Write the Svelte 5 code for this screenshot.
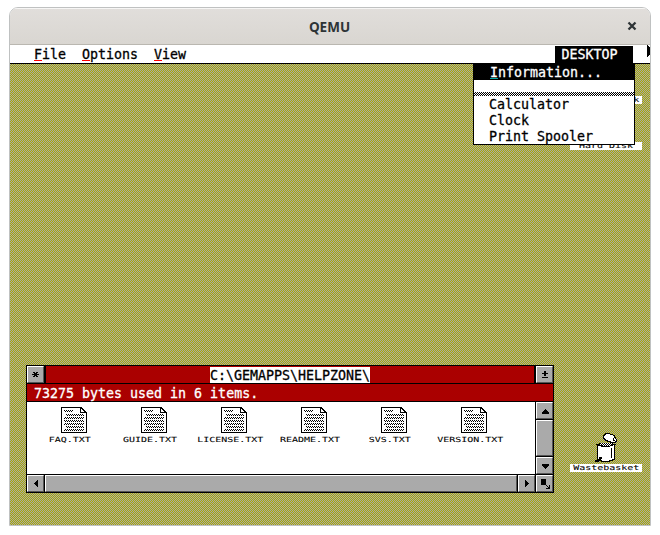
<script>
  const files = ['FAQ.TXT', 'GUIDE.TXT', 'LICENSE.TXT', 'README.TXT', 'SVS.TXT', 'VERSION.TXT'];
  const menus = ['File', 'Options', 'View'];
  const apps = ['Calculator', 'Clock', 'Print Spooler'];
  const lines = [[3, 3, 9], [5, 7, 18], [3, 10, 20], [3, 13, 20], [3, 16, 20], [5, 19, 18], [3, 22, 20]];
</script>

{#snippet glyph(d)}
  <svg width="15" height="15" viewBox="0 0 15 15" shape-rendering="crispEdges"><path {d} /></svg>
{/snippet}

<div class="frame">
  <header class="caption">
    <span>QEMU</span>
    <svg class="close" width="10" height="10" viewBox="0 0 10 10"><path d="M1.5 1.5l7 7M8.500 1.500l-7 7" stroke="#2e3436" stroke-width="2.3" /></svg>
  </header>
  <div class="screen">
    <nav class="menubar">
      {#each menus as m}
        <span class="item">{m}<i></i></span>
      {/each}
      <span class="desk">DESKTOP</span>
      <svg class="more" width="3" height="12" viewBox="0 0 3 12" shape-rendering="crispEdges"><path d="M0 0h1v1h1v1h1v8h-1v1h-1v1h-1z" /></svg>
    </nav>
    <main class="desktop">
      <div class="label floppy"><span class="tiny">Floppy Disk</span></div>
      <div class="label hard"><span class="tiny">Hard Disk</span></div>
      <div class="trash">
        <svg width="24" height="30" viewBox="0 0 24 30" shape-rendering="crispEdges">
          <defs>
            <pattern id="mesh" width="2" height="2" patternUnits="userSpaceOnUse"><rect width="2" height="2" fill="#fff" /><path d="M0 0h1v1H0zM1 1h1v1H1z" /></pattern>
          </defs>
          <path d="M3 11h18v16h-2v1h-3v1H7v-1H4v-1H3z" />
          <path d="M4 12h16v14h-2v1h-3v1H8v-1H5v-1H4z" fill="#fff" />
          <path d="M2 11h3v-1h14v1h3v1h-3v1h-3v1H7v-1H4v-1H2z" />
          <path d="M6 10h12v2h-2v1H8v-1H6z" fill="url(#mesh)" />
          <path d="M11 0h5v1h3v1h2v2h1v2h1v3h-1v1h-6v-1h-3V8h-2V7h-1V6H9V2h1V1h1z" />
          <path d="M11 2h1V1h4v1h3v1h1v2h1v1h1v2h-1v1h-4V8h-3V7h-2V6h-1V5h-1V3h1z" fill="#fff" />
          <path d="M19 5h1v2h1v1h-2z" />
          <path d="M5 24h3v2H7v1H6v1H5v1H1v-2h2v-1h2zM17 15h1v10h-1z" />
        </svg>
      </div>
      <div class="label waste"><span class="tiny">Wastebasket</span></div>

      <section class="window">
        <div class="row title">
          <div class="btn">{@render glyph('M5 5h2v1h1V5h2v1H9v1h2v1H9v1h1v1H8V9H7v1H5V9h1V8H4V7h2V6H5z')}</div>
          <div class="path"><span>C:\GEMAPPS\HELPZONE\</span></div>
          <div class="btn">{@render glyph('M7 4h2v2h2v1H9v2H7V7H5V6h2zM5 10h6v1H5z')}</div>
        </div>
        <div class="info">73275 bytes used in 6 items.</div>
        <div class="body">
          <div class="files">
            {#each files as f}
              <div class="file">
                <svg width="26" height="26" viewBox="0 0 26 26" shape-rendering="crispEdges">
                  <defs>
                    <pattern id="ink" width="2" height="2" patternUnits="userSpaceOnUse"><path d="M0 0h1v1H0zM1 1h1v1H1z" /></pattern>
                  </defs>
                  <path d="M0 0h21v1h1v1h1v1h1v1h1v1h1v21H0z" />
                  <path d="M1 1h18v5h6v19H1z" fill="#fff" />
                  <path d="M20 2h1v1h1v1h1v1h-3z" fill="#fff" />
                  {#each lines as [x, y, w]}
                    <rect {x} {y} width={w} height="2" fill="url(#ink)" />
                  {/each}
                </svg>
                <span class="tiny">{f}</span>
              </div>
            {/each}
          </div>
          <div class="vbar">
            <div class="btn">{@render glyph('M8 6h1v1h1v1h1v1h1v2H5V9h1V8h1V7h1z')}</div>
            <div class="btn thumb"></div>
            <div class="btn">{@render glyph('M5 6h7v2h-1v1h-1v1H9v1H8v-1H7V9H6V8H5z')}</div>
          </div>
        </div>
        <div class="row hbar">
          <div class="btn">{@render glyph('M10 4v7H9v-1H8V9H7V8H6V7h1V6h1V5h1V4z')}</div>
          <div class="btn thumb"></div>
          <div class="btn">{@render glyph('M6 4h1v1h1v1h1v1h1v1H9v1H8v1H7v1H6z')}</div>
          <div class="btn">{@render glyph('M4 3h5v6H4zM9 9h1v1h1v1h1V9h1v4H9v-1h2v-1h-1v-1H9z')}</div>
        </div>
      </section>
    </main>
    <div class="menu">
      <div class="entry on"><span class="item">Information...<i></i></span></div>
      <div class="gap"></div>
      <div class="rule"></div>
      {#each apps as a}
        <div class="entry">{a}</div>
      {/each}
    </div>
  </div>
</div>

<style>
  :global(body) { background: #fff; }
  .frame {
    box-sizing: border-box;
    width: 642px;
    height: 519px;
    margin: 7px 0 0 9px;
    border: 1px solid #bfc1c1;
    border-radius: 9px 9px 0 0;
    overflow: hidden;
    color: #000;
    font: 13.3px/16px "DejaVu Sans Mono", monospace;
    -webkit-text-stroke: 0.3px currentColor;
  }
  .caption {
    box-sizing: border-box;
    display: flex;
    align-items: center;
    height: 37px;
    padding: 0 13px 0 22px;
    background: linear-gradient(#e1dedb, #d9d6d1);
    border-bottom: 1px solid #bab7b0;
    box-shadow: inset 0 1px #f7f6f5;
    color: #2e3436;
    font: bold 13.5px/20px "Open Sans", "Noto Sans", sans-serif;
    -webkit-text-stroke: 0;
  }
  .caption span { flex: 1; text-align: center; padding-top: 1px; }
  .screen { position: relative; width: 640px; height: 480px; }
  .menubar {
    box-sizing: border-box;
    display: flex;
    height: 19px;
    padding: 1px 0 0 24px;
    gap: 16px;
    background: #fff;
    border-bottom: 1px solid #000;
    line-height: 17px;
  }
  .item { position: relative; }
  .item i {
    position: absolute;
    left: 0;
    top: 14px;
    width: 8px;
    height: 1px;
    background: #f00;
  }
  .desk {
    box-sizing: border-box;
    width: 78px;
    height: 17px;
    margin-left: auto;
    padding-left: 6.5px;
    background: #000;
    color: #fff;
  }
  .more { margin: -1px 0 0 -2px; }
  .desktop {
    position: relative;
    height: 461px;
    background: repeating-conic-gradient(#aaaa00 0 25%, #aaaaaa 0 50%) 0 0 / 2px 2px;
  }
  .tiny {
    display: inline-block;
    font-size: 7px;
    line-height: 8px;
    white-space: nowrap;
    transform: scaleX(1.424);
    -webkit-text-stroke-width: 0.08px;
  }
  .label {
    position: absolute;
    left: 560px;
    width: 72px;
    height: 8px;
    background: #fff;
    line-height: 8px;
    display: flex;
    justify-content: center;
  }
  .floppy { top: 32px; }
  .hard { top: 78px; }
  .waste { top: 400px; }
  .trash { position: absolute; left: 584px; top: 369px; }
  svg { display: block; flex: none; }
  .menu {
    box-sizing: border-box;
    position: absolute;
    left: 463px;
    top: 18px;
    width: 162px;
    height: 82px;
    border: 1px solid #000;
    background: #fff;
  }
  .entry { box-sizing: border-box; height: 16px; padding: 1px 0 0 15px; white-space: nowrap; }
  .on { background: #000; color: #fff; padding-left: 16px; }
  .on i { background: #0aa; top: 13px; }
  .gap { height: 12px; }
  .rule { height: 4px; background: repeating-conic-gradient(#000 0 25%, #fff 0 50%) 0 0 / 2px 2px; }
  .window {
    box-sizing: border-box;
    position: absolute;
    left: 16px;
    top: 301px;
    width: 528px;
    height: 128px;
    border: 1px solid #000;
    background: #000;
    display: flex;
    flex-direction: column;
    gap: 1px;
  }
  .row { display: flex; height: 17px; gap: 1px; }
  .title { gap: 2px; }
  .btn {
    box-sizing: border-box;
    width: 17px;
    height: 17px;
    background: #aaa;
    border: 1px solid;
    border-color: #fff #555 #555 #fff;
  }
  .path { flex: 1; display: flex; justify-content: center; background: #a00; }
  .path span { height: 16px; margin: 1px 0 0; background: #fff; line-height: 18px; }
  .info { height: 17px; padding-left: 7px; background: #a00; color: #fff; line-height: 20px; }
  .body { display: flex; height: 72px; gap: 1px; }
  .files { flex: 1; display: flex; padding: 5px 0 0 3px; background: #fff; }
  .file { width: 80px; display: flex; flex-direction: column; align-items: center; gap: 3px; }
  .file svg { margin-left: 8px; }
  .vbar { display: flex; flex-direction: column; gap: 1px; }
  .vbar .thumb { flex: 1; }
  .hbar .thumb { flex: 1; width: auto; }
</style>
